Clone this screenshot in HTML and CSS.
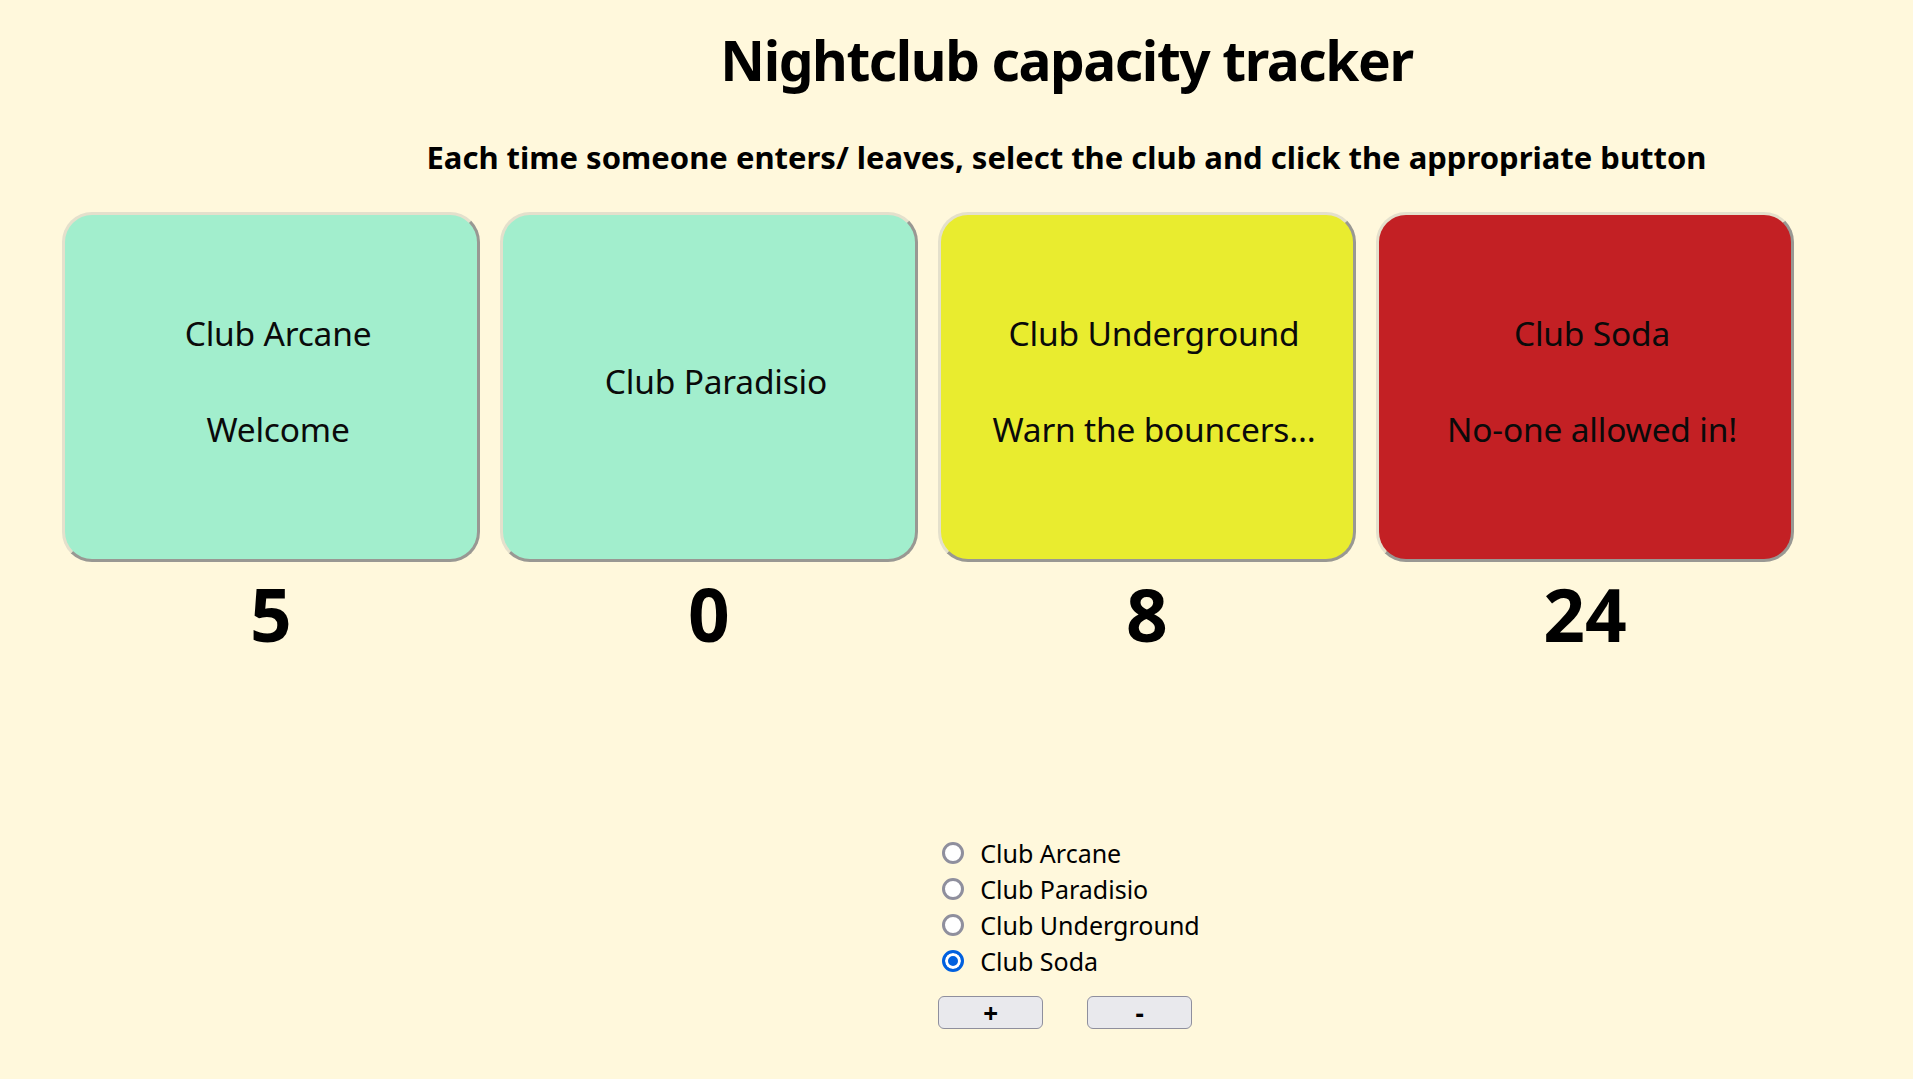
FILE: index.html
```html
<!DOCTYPE html>
<html lang="en">
<head>
<meta charset="utf-8">
<title>Nightclub capacity tracker</title>
<link rel="stylesheet" href="styles.css">
</head>
<body>
<div class="page">
  <header class="header">
    <h1 class="title">Nightclub capacity tracker</h1>
    <h3 class="subtitle">Each time someone enters/ leaves, select the club and click the appropriate button</h3>
  </header>

  <section class="clubs">
    <div class="club">
      <div class="card card-green">
        <div class="card-name">Club Arcane</div>
        <div class="card-msg">Welcome</div>
      </div>
      <div class="count">5</div>
    </div>
    <div class="club">
      <div class="card card-green">
        <div class="card-name">Club Paradisio</div>
      </div>
      <div class="count">0</div>
    </div>
    <div class="club">
      <div class="card card-yellow">
        <div class="card-name">Club Underground</div>
        <div class="card-msg">Warn the bouncers...</div>
      </div>
      <div class="count">8</div>
    </div>
    <div class="club">
      <div class="card card-red">
        <div class="card-name">Club Soda</div>
        <div class="card-msg">No-one allowed in!</div>
      </div>
      <div class="count">24</div>
    </div>
  </section>

  <section class="controls">
    <form class="control-box">
      <label class="option"><input class="radio" type="radio" name="club" value="arcane"><span>Club Arcane</span></label>
      <label class="option"><input class="radio" type="radio" name="club" value="paradisio"><span>Club Paradisio</span></label>
      <label class="option"><input class="radio" type="radio" name="club" value="underground"><span>Club Underground</span></label>
      <label class="option"><input class="radio" type="radio" name="club" value="soda" checked><span>Club Soda</span></label>
      <div class="buttons">
        <button type="button" class="btn">+</button>
        <button type="button" class="btn">-</button>
      </div>
    </form>
  </section>
</div>
</body>
</html>
```

FILE: styles.css
```css
html, body {
  margin: 0;
  padding: 0;
}

body {
  background: #fff8dc;
  color: #000;
  font-family: "Noto Sans", "Open Sans", sans-serif;
}

.page {
  padding-top: 26px;
}

.header {
  padding-left: 220px;
  text-align: center;
}

.title {
  margin: 0;
  font-size: 55px;
  line-height: 68px;
  font-weight: 700;
  letter-spacing: -1.4px;
}

.subtitle {
  margin: 43px 0 0;
  font-size: 31px;
  line-height: 40px;
  font-weight: 700;
}

.clubs {
  display: flex;
  gap: 20px;
  padding-left: 62px;
  margin-top: 35px;
}

.club {
  display: flex;
  flex-direction: column;
  align-items: center;
  width: 418px;
}

.card {
  box-sizing: border-box;
  width: 418px;
  height: 350px;
  border: 3px solid;
  border-color: #e4e0cc #999893 #999893 #e4e0cc;
  border-radius: 30px;
  display: flex;
  flex-direction: column;
  justify-content: center;
  align-items: center;
  padding: 0 0 13px 14px;
  font-size: 33.5px;
  line-height: 48px;
  letter-spacing: -0.2px;
  color: #0a0a0a;
}

.card-msg {
  margin-top: 48px;
}

.card-green { background: #a2eecd; }
.card-yellow { background: #e9ec2f; }
.card-red { background: #c32024; }

.count {
  margin-top: 8px;
  font-size: 73px;
  line-height: 88px;
  font-weight: 700;
}

.controls {
  padding-left: 225px;
  margin-top: 177px;
  text-align: center;
}

.control-box {
  display: inline-flex;
  flex-direction: column;
  width: max-content;
  text-align: left;
  white-space: nowrap;
}

.option {
  display: flex;
  align-items: center;
  height: 36px;
  font-size: 25px;
  line-height: 36px;
}

.radio {
  appearance: none;
  -webkit-appearance: none;
  box-sizing: border-box;
  flex: none;
  width: 22px;
  height: 22px;
  margin: 0 16px 0 4px;
  border: 3px solid #8f8f9d;
  border-radius: 50%;
  background: #fff;
}

.radio:checked {
  border-color: #0060df;
  background: #0060df;
  box-shadow: inset 0 0 0 3px #fff;
}

.buttons {
  display: flex;
  gap: 44px;
  margin-top: 17px;
}

.btn {
  box-sizing: border-box;
  width: 105px;
  height: 33px;
  padding: 0;
  border: 1px solid #8f8f9d;
  border-radius: 6px;
  background: #e9e9ed;
  color: #000;
  font-family: "Noto Sans", sans-serif;
  font-size: 26px;
  font-weight: 700;
  line-height: 30px;
}
```
